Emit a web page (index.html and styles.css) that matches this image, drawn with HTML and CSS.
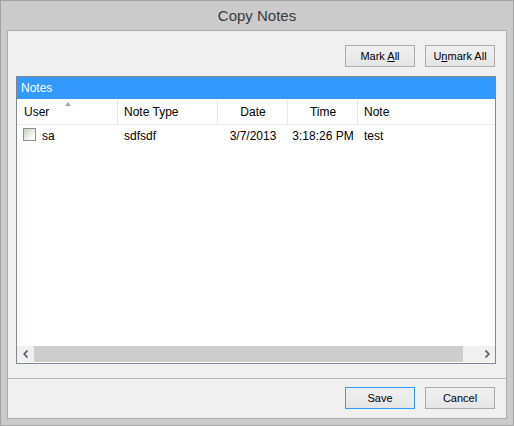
FILE: index.html
```html
<!DOCTYPE html>
<html>
<head>
<meta charset="utf-8">
<title>Copy Notes</title>
<link rel="stylesheet" href="styles.css">
</head>
<body>
<div class="window">
  <div class="title">Copy Notes</div>
  <div class="panel">
    <div class="toolbar">
      <button class="btn">Mark <u>A</u>ll</button>
      <button class="btn">U<u>n</u>mark All</button>
    </div>
    <div class="grid">
      <div class="caption">Notes</div>
      <div class="body">
        <div class="row head">
          <div class="cell c-user">User<span class="sort"></span></div>
          <div class="cell c-type">Note Type</div>
          <div class="cell c-date">Date</div>
          <div class="cell c-time">Time</div>
          <div class="cell c-note">Note</div>
        </div>
        <div class="row data">
          <div class="cell c-user"><span class="check"></span>sa</div>
          <div class="cell c-type">sdfsdf</div>
          <div class="cell c-date">3/7/2013</div>
          <div class="cell c-time">3:18:26 PM</div>
          <div class="cell c-note">test</div>
        </div>
      </div>
      <div class="hscroll">
        <div class="arrow">
          <svg width="6" height="8" viewBox="0 0 6 8"><path d="M4.5 0.5 L1.2 4 L4.5 7.5" fill="none" stroke="#606060" stroke-width="1.8"/></svg>
        </div>
        <div class="track"><div class="thumb" style="width:429px"></div></div>
        <div class="arrow">
          <svg width="6" height="8" viewBox="0 0 6 8"><path d="M1.5 0.5 L4.8 4 L1.5 7.5" fill="none" stroke="#606060" stroke-width="1.8"/></svg>
        </div>
      </div>
    </div>
    <div class="footer">
      <button class="btn default">Save</button>
      <button class="btn">Cancel</button>
    </div>
  </div>
</div>
</body>
</html>
```

FILE: styles.css
```css
* { box-sizing: border-box; }
html, body { margin: 0; padding: 0; }
body {
  width: 514px;
  height: 426px;
  font-family: "Liberation Sans", Arial, sans-serif;
  font-size: 12px;
  color: #000;
}
.window {
  width: 514px;
  height: 426px;
  background: #cbcbcb;
  border: 1px solid #a2a2a2;
  padding: 0 6px 6px 6px;
  display: flex;
  flex-direction: column;
}
.title {
  height: 29px;
  line-height: 29px;
  text-align: center;
  font-size: 15px;
  color: #3a3a3a;
}
.panel {
  flex: 1;
  background: #f0f0f0;
  border: 1px solid #acacac;
  display: flex;
  flex-direction: column;
}
.toolbar {
  display: flex;
  justify-content: flex-end;
  gap: 10px;
  padding: 14px 11px 0 0;
  height: 45px;
}
.btn {
  width: 70px;
  height: 22px;
  padding: 0;
  margin: 0;
  border: 1px solid #acacac;
  background: linear-gradient(#f0f0f0, #e5e5e5);
  font-family: "Liberation Sans", Arial, sans-serif;
  font-size: 11px;
  color: #000;
  line-height: 20px;
}
.btn.default { border-color: #3399ff; }
.grid {
  margin: 0 10px 0 8px;
  height: 288px;
  border: 1px solid #828790;
  background: #fff;
  display: flex;
  flex-direction: column;
}
.caption {
  height: 22px;
  line-height: 22px;
  background: #3399ff;
  color: #fff;
  padding-left: 4px;
}
.body { flex: 1; }
.row { display: flex; }
.row.head {
  height: 26px;
  border-bottom: 1px solid #eaeef3;
}
.row.head .cell { line-height: 25px; padding-top: 1px; }
.row.data { height: 21px; }
.row.data .cell { line-height: 21px; padding-top: 1px; }
.cell {
  padding-left: 6px;
  white-space: nowrap;
}
.c-user { width: 100px; padding-left: 7px; position: relative; display: flex; }
.c-type { width: 100px; }
.c-date { width: 70px; text-align: center; padding-left: 1px; }
.c-time { width: 70px; text-align: center; padding-left: 1px; }
.c-note { flex: 1; }
.head .c-type, .head .c-date, .head .c-time, .head .c-note { border-left: 1px solid #e3e9f1; }
.data .c-type, .data .c-date, .data .c-time, .data .c-note { border-left: 1px solid transparent; }
.sort {
  position: absolute;
  left: 48px;
  top: 3px;
  width: 0;
  height: 0;
  border-left: 3.5px solid transparent;
  border-right: 3.5px solid transparent;
  border-bottom: 4px solid #98aac0;
}
.check {
  width: 13px;
  height: 13px;
  margin: 2px 6px 0 -1px;
  border: 1px solid #8f8f8f;
  background: linear-gradient(135deg, #c3cec3 0%, #e4eae4 45%, #ffffff 80%);
}
.hscroll {
  height: 16px;
  background: #f0f0f0;
  display: flex;
  margin-bottom: 1px;
}
.arrow {
  width: 17px;
  display: flex;
  align-items: center;
  justify-content: center;
}
.track { flex: 1; display: flex; }
.thumb { background: #cdcdcd; height: 16px; }
.footer {
  margin-top: 14px;
  border-top: 1px solid #b4b4b4;
  display: flex;
  justify-content: flex-end;
  gap: 10px;
  padding: 8px 11px 0 0;
  flex: 1;
}
```
